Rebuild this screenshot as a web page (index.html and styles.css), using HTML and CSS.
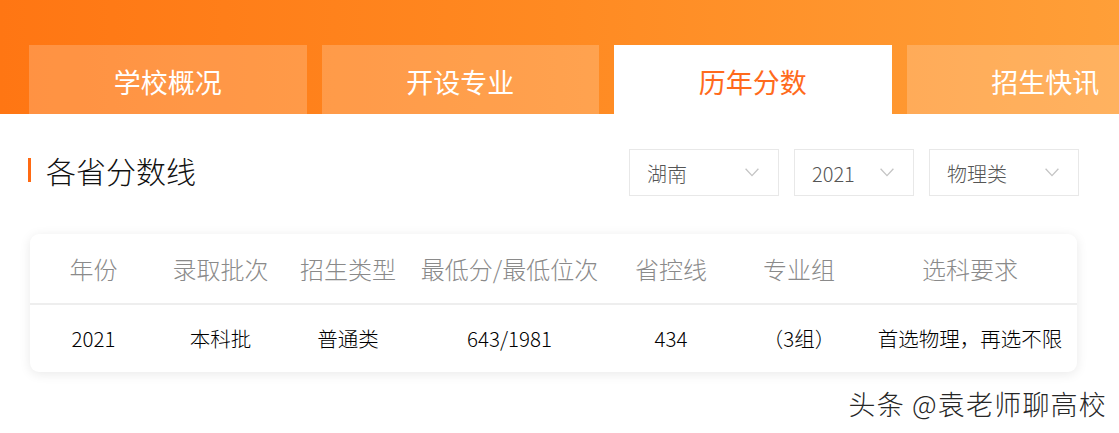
FILE: index.html
```html
<!DOCTYPE html>
<html lang="zh-CN">
<head>
<meta charset="utf-8">
<title>历年分数</title>
<link rel="stylesheet" href="styles.css">
</head>
<body>
<div class="page">
  <header class="header">
    <nav class="tabs">
      <div class="tab">学校概况</div>
      <div class="tab">开设专业</div>
      <div class="tab active">历年分数</div>
      <div class="tab">招生快讯</div>
    </nav>
  </header>

  <main class="main">
    <div class="title-row">
      <h2 class="title">各省分数线</h2>
      <div class="filters">
        <div class="select wide"><span>湖南</span><svg class="chev" width="14" height="9" viewBox="0 0 14 9"><path d="M0.6 0.8 L7 7.6 L13.4 0.8" fill="none" stroke="#c4c4c4" stroke-width="1.3"/></svg></div>
        <div class="select narrow"><span>2021</span><svg class="chev" width="14" height="9" viewBox="0 0 14 9"><path d="M0.6 0.8 L7 7.6 L13.4 0.8" fill="none" stroke="#c4c4c4" stroke-width="1.3"/></svg></div>
        <div class="select wide"><span>物理类</span><svg class="chev" width="14" height="9" viewBox="0 0 14 9"><path d="M0.6 0.8 L7 7.6 L13.4 0.8" fill="none" stroke="#c4c4c4" stroke-width="1.3"/></svg></div>
      </div>
    </div>

    <div class="card">
      <div class="row head">
        <div>年份</div>
        <div>录取批次</div>
        <div>招生类型</div>
        <div>最低分/最低位次</div>
        <div>省控线</div>
        <div>专业组</div>
        <div>选科要求</div>
      </div>
      <div class="row body">
        <div>2021</div>
        <div>本科批</div>
        <div>普通类</div>
        <div>643/1981</div>
        <div>434</div>
        <div>（3组）</div>
        <div>首选物理，再选不限</div>
      </div>
    </div>
  </main>

  <div class="watermark">头条 @袁老师聊高校</div>
</div>
</body>
</html>
```

FILE: styles.css
```css
* { box-sizing: border-box; }

html, body {
  margin: 0;
  padding: 0;
  background: #ffffff;
}

body {
  font-family: "Noto Sans CJK SC", "Noto Sans", sans-serif;
  font-weight: 300;
  color: #111;
}

.page {
  position: relative;
  width: 1119px;
  height: 433px;
  overflow: hidden;
}

.header {
  height: 114px;
  padding-top: 45px;
  padding-left: 29px;
  background: linear-gradient(90deg, #ff7613 0%, #ff8a22 50%, #ff9f38 100%);
  overflow: hidden;
}

.tabs {
  display: flex;
  gap: 15px;
  height: 69px;
}

.tab {
  flex: 0 0 277.5px;
  height: 69px;
  display: flex;
  align-items: center;
  justify-content: center;
  background: rgba(255, 255, 255, 0.2);
  color: #ffffff;
  font-size: 27px;
  font-weight: 400;
  line-height: 1;
  padding-top: 3px;
}

.tab.active {
  background: #ffffff;
  color: #ff6a1c;
}

.main {
  padding: 35px 40px 0 28px;
}

.title-row {
  display: flex;
  align-items: center;
  justify-content: space-between;
  height: 47px;
}

.title {
  margin: 0;
  font-weight: 300;
  font-size: 30px;
  line-height: 1;
  color: #111;
  display: flex;
  align-items: center;
  gap: 15px;
  margin-top: -6px;
}

.title::before {
  content: "";
  display: block;
  width: 3px;
  height: 24px;
  background: #ff6a13;
}

.filters {
  display: flex;
  gap: 15px;
}

.select {
  height: 47px;
  border: 1px solid #e8e8e8;
  display: flex;
  align-items: center;
  justify-content: space-between;
  padding: 0 19px 0 17px;
  font-size: 20px;
  color: #555;
  background: #fff;
}

.select span {
  line-height: 1;
  padding-top: 2px;
}

.select.wide { width: 150px; }
.select.narrow { width: 120px; }

.chev { display: block; }

.card {
  margin-top: 38px;
  margin-left: 2px;
  width: 1047px;
  background: #fff;
  border-radius: 9px;
  box-shadow: 0 2px 12px rgba(0, 0, 0, 0.09);
  overflow: hidden;
}

.row {
  display: grid;
  grid-template-columns: 127px 127px 128px 195px 128px 128px 214px;
  align-items: center;
  text-align: center;
}

.row.head {
  height: 71px;
  border-bottom: 2px solid #eeeeee;
  font-size: 24px;
  color: #8a8a8a;
}

.row.body {
  height: 67px;
  font-size: 20.5px;
  color: #000;
}

.row > div {
  line-height: 1;
  white-space: nowrap;
}

.watermark {
  position: absolute;
  right: 12px;
  top: 388px;
  font-size: 27px;
  line-height: 1.2;
  color: #262626;
  letter-spacing: 1.2px;
  text-shadow: 0 0 2px #ffffff, 1px 1px 1px rgba(255,255,255,0.9);
}
```
